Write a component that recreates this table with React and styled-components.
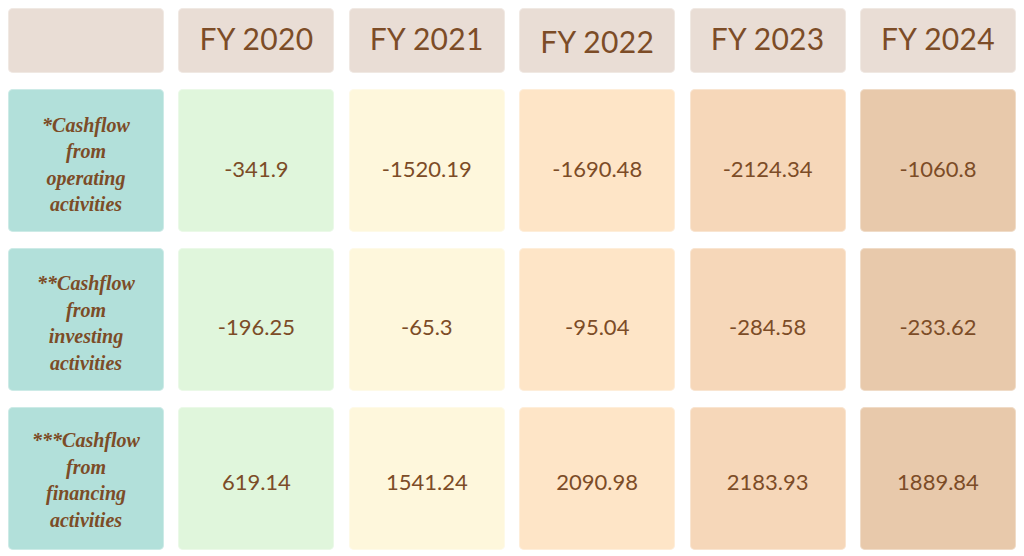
import React from 'react';
import styled, { createGlobalStyle } from 'styled-components';

const GlobalStyle = createGlobalStyle`
  html, body {
    margin: 0;
    padding: 0;
    background: #ffffff;
  }
`;

const YEARS = ['FY 2020', 'FY 2021', 'FY 2022', 'FY 2023', 'FY 2024'];
const COLORS = ['#e0f6dc', '#fef7dc', '#fee5c7', '#f6d7b9', '#e8c9ab'];

const ROWS = [
  {
    label: ['*Cashflow', 'from', 'operating', 'activities'],
    values: ['-341.9', '-1520.19', '-1690.48', '-2124.34', '-1060.8'],
    shift: 16,
  },
  {
    label: ['**Cashflow', 'from', 'investing', 'activities'],
    values: ['-196.25', '-65.3', '-95.04', '-284.58', '-233.62'],
    shift: 14,
  },
  {
    label: ['***Cashflow', 'from', 'financing', 'activities'],
    values: ['619.14', '1541.24', '2090.98', '2183.93', '1889.84'],
    shift: 6,
  },
];

const Table = styled.div`
  display: grid;
  grid-template-columns: repeat(6, 1fr);
  grid-template-rows: 65px repeat(3, 143px);
  column-gap: 14.4px;
  row-gap: 16px;
  padding: 8px;
  width: 1024px;
  box-sizing: border-box;
`;

const Cell = styled.div`
  border-radius: 5px;
  box-shadow: inset 0 0 0 1px rgba(255, 255, 255, 0.35);
  display: flex;
  align-items: center;
  justify-content: center;
  color: #7c4c27;
  text-align: center;
`;

const HeadCell = styled(Cell)`
  background: #e9ddd5;
  font-family: Lato, 'Liberation Sans', sans-serif;
  font-size: 30px;
  letter-spacing: 0.3px;
  padding-bottom: ${props => (props.$low ? '0' : '6px')};
`;

const LabelCell = styled(Cell)`
  background: #b2e0da;
  font-family: 'Liberation Serif', serif;
  font-style: italic;
  font-weight: 700;
  font-size: 20px;
  line-height: 26.5px;
  flex-direction: column;
  padding-top: ${props => props.$shift / 2}px;
`;

const ValueCell = styled(Cell)`
  background: ${props => props.$bg};
  font-family: Lato, 'Liberation Sans', sans-serif;
  font-size: 22px;
  padding-top: ${props => props.$shift}px;
`;

export default function App() {
  return (
    <>
      <GlobalStyle />
      <Table>
        <HeadCell />
        {YEARS.map(year => (
          <HeadCell key={year} $low={year === 'FY 2022'}>
            {year}
          </HeadCell>
        ))}
        {ROWS.map(row => (
          <React.Fragment key={row.label[2]}>
            <LabelCell $shift={row.shift}>
              {row.label.map(line => (
                <span key={line}>{line}</span>
              ))}
            </LabelCell>
            {row.values.map((value, i) => (
              <ValueCell key={i} $bg={COLORS[i]} $shift={row.shift}>
                {value}
              </ValueCell>
            ))}
          </React.Fragment>
        ))}
      </Table>
    </>
  );
}
